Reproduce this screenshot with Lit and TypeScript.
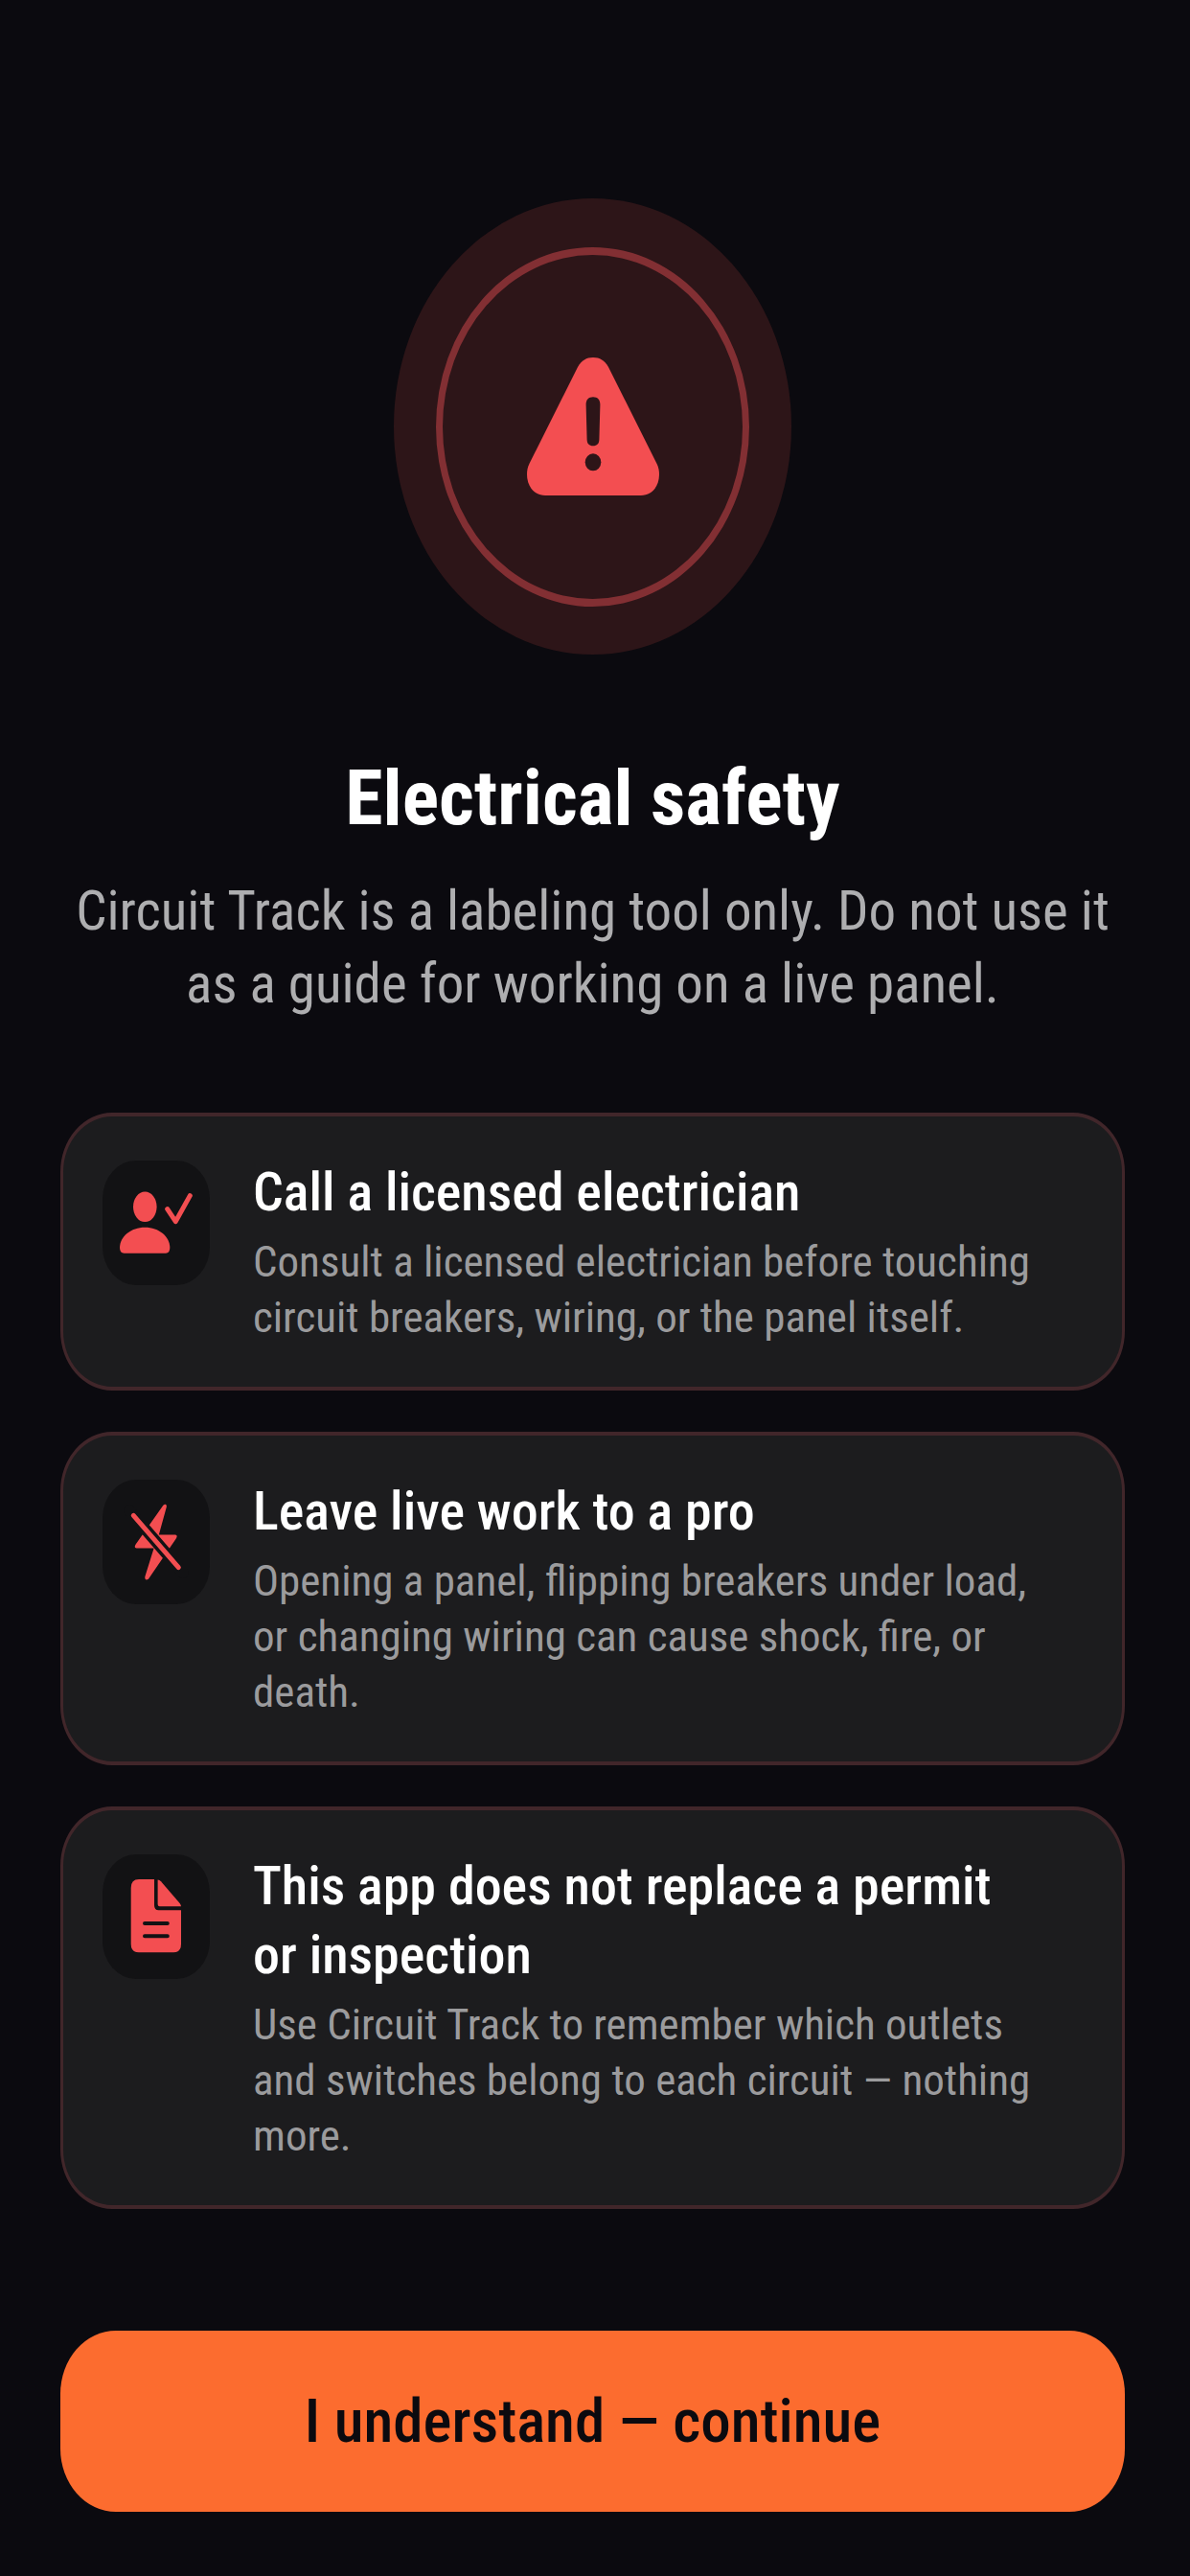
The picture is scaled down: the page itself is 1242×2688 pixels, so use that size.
import { LitElement, html, css, svg, type SVGTemplateResult } from "lit";
import { customElement, property } from "lit/decorators.js";

type IconName = "electrician" | "bolt-off" | "document";

const icons: Record<IconName, SVGTemplateResult> = {
  electrician: svg`
    <ellipse cx="44.3" cy="48.3" rx="12.3" ry="15.7" />
    <path d="M22.5 96.7H66Q70.3 96.7 70.3 91C70.3 79.5 59 69.7 44.3 69.7S18 79.5 18 91Q18 96.7 22.5 96.7Z" />
    <path class="line" d="M67.7 50.6L76.3 63.6L91.3 36.6" />`,
  "bolt-off": svg`
    <path d="M63 27.2L34.8 67.2C33 70 33.6 71.5 36.6 71.5H53.6L44.4 101C43.6 104.4 46.4 105.6 48.4 103L76.6 61.8C78.4 59 77.8 57.5 75 57.5H58.8L66.8 28.6C67.4 25.4 65 24.6 63 27.2Z" />
    <path class="gap" d="M28 32.3L84 97.1" />
    <path class="line" d="M32.3 37.3L79.3 91.7" />`,
  document: svg`
    <path d="M38 26H54V53Q54 58.3 58.6 58.3H82V93.6Q82 102.3 74 102.3H38Q29.7 102.3 29.7 93.6V35Q29.7 26 38 26Z" />
    <path d="M57.6 26.6Q59.6 26.6 61 28.2L80.6 51Q82 52.8 82 54.2H59.6Q57.6 54.2 57.6 52Z" />
    <path class="rule" d="M44 72H67.8M44 85.2H67.8" />`,
};

@customElement("safety-card")
export class SafetyCard extends LitElement {
  @property() icon: IconName = "document";
  @property() heading = "";
  @property() text = "";

  static styles = css`
    :host {
      display: block;
    }
    .card {
      display: flex;
      align-items: flex-start;
      gap: 45px;
      padding: 43px 83px 43px 41px;
      border: solid #41262a;
      border-width: 4px 3px;
      border-radius: 54px / 62px;
      background: #1c1c1e;
    }
    .tile {
      flex: none;
      width: 112px;
      height: 130px;
      margin-top: 3px;
      border-radius: 35px / 40px;
      background: #121214;
    }
    .tile svg {
      display: block;
      fill: #f34e51;
    }
    .line,
    .gap,
    .rule {
      fill: none;
      stroke: #f34e51;
      stroke-width: 5;
      stroke-linecap: round;
      stroke-linejoin: round;
    }
    .gap,
    .rule {
      stroke: #121214;
    }
    .gap {
      stroke-width: 12;
    }
    .rule {
      stroke-width: 4;
    }
    .copy {
      flex: 1;
      min-width: 0;
    }
    .title {
      margin: 0 0 8px;
      font-size: 56px;
      line-height: 72px;
      font-weight: 500;
      color: #fff;
    }
    .text {
      margin: 0;
      font-size: 45px;
      line-height: 58px;
      color: #9b9b9d;
    }
  `;

  render() {
    return html`
      <article class="card">
        <div class="tile">
          <svg viewBox="0 0 112 130" width="112" height="130" aria-hidden="true">${icons[this.icon]}</svg>
        </div>
        <div class="copy">
          <h2 class="title">${this.heading}</h2>
          <p class="text">${this.text}</p>
        </div>
      </article>
    `;
  }
}

const notices: { icon: IconName; heading: string; text: string }[] = [
  {
    icon: "electrician",
    heading: "Call a licensed electrician",
    text: "Consult a licensed electrician before touching circuit breakers, wiring, or the panel itself.",
  },
  {
    icon: "bolt-off",
    heading: "Leave live work to a pro",
    text: "Opening a panel, flipping breakers under load, or changing wiring can cause shock, fire, or death.",
  },
  {
    icon: "document",
    heading: "This app does not replace a permit or inspection",
    text: "Use Circuit Track to remember which outlets and switches belong to each circuit — nothing more.",
  },
];

@customElement("app-root")
export class AppRoot extends LitElement {
  static styles = css`
    :host {
      display: block;
      background: #0b0a0f;
      font-family: "Roboto Condensed", Roboto, "Liberation Sans", sans-serif;
    }
    .page {
      box-sizing: border-box;
      min-height: 100vh;
      display: flex;
      flex-direction: column;
      padding: 207px 68px 67px 63px;
    }
    .badge,
    .ring {
      display: grid;
      place-items: center;
      box-sizing: border-box;
      border-radius: 50%;
    }
    .badge {
      align-self: center;
      width: 415px;
      height: 476px;
      background: #2d1518;
    }
    .ring {
      width: 327px;
      height: 375px;
      border: solid #822f33;
      border-width: 8px 7px;
    }
    .warning {
      fill: #f34e51;
    }
    .mark {
      fill: #2d1518;
    }
    .intro {
      margin: 102px 0 96px;
      text-align: center;
    }
    .title {
      margin: 0 0 32px;
      font-size: 80px;
      line-height: 96px;
      font-weight: 700;
      color: #fff;
    }
    .lead {
      margin: 0;
      font-size: 57px;
      line-height: 76px;
      color: #aeaeb0;
    }
    .cards {
      display: grid;
      gap: 43px;
      margin-bottom: 64px;
    }
    .continue {
      margin-top: auto;
      padding: 56px 32px;
      border: 0;
      border-radius: 58px / 66px;
      background: #fc6c2f;
      color: #0b0a0f;
      font-family: inherit;
      font-size: 63px;
      line-height: 77px;
      font-weight: 500;
      cursor: pointer;
    }
  `;

  render() {
    return html`
      <main class="page">
        <div class="badge">
          <div class="ring">
            <svg class="warning" viewBox="0 0 138 144" width="138" height="144" role="img" aria-label="Warning">
              <path d="M53 10C57 3 62 0 69 0S81 3 85 10L135.6 111C137.4 115 138 118 138 122C138 134.5 130.5 144 119 144H19C7.5 144 0 134.5 0 122C0 118 .6 115 2.4 111Z" />
              <path class="mark" d="M61.6 49C61.6 44 64.5 41.3 69 41.3S76.4 44 76.4 49L75.4 85.5C75.3 90 73 92.3 69 92.3S62.7 90 62.6 85.5Z" />
              <ellipse class="mark" cx="69" cy="109.3" rx="8.3" ry="9" />
            </svg>
          </div>
        </div>
        <header class="intro">
          <h1 class="title">Electrical safety</h1>
          <p class="lead">Circuit Track is a labeling tool only. Do not use it as a guide for working on a live panel.</p>
        </header>
        <section class="cards">
          ${notices.map((n) => html`<safety-card .icon=${n.icon} .heading=${n.heading} .text=${n.text}></safety-card>`)}
        </section>
        <button class="continue" type="button">I understand — continue</button>
      </main>
    `;
  }
}
